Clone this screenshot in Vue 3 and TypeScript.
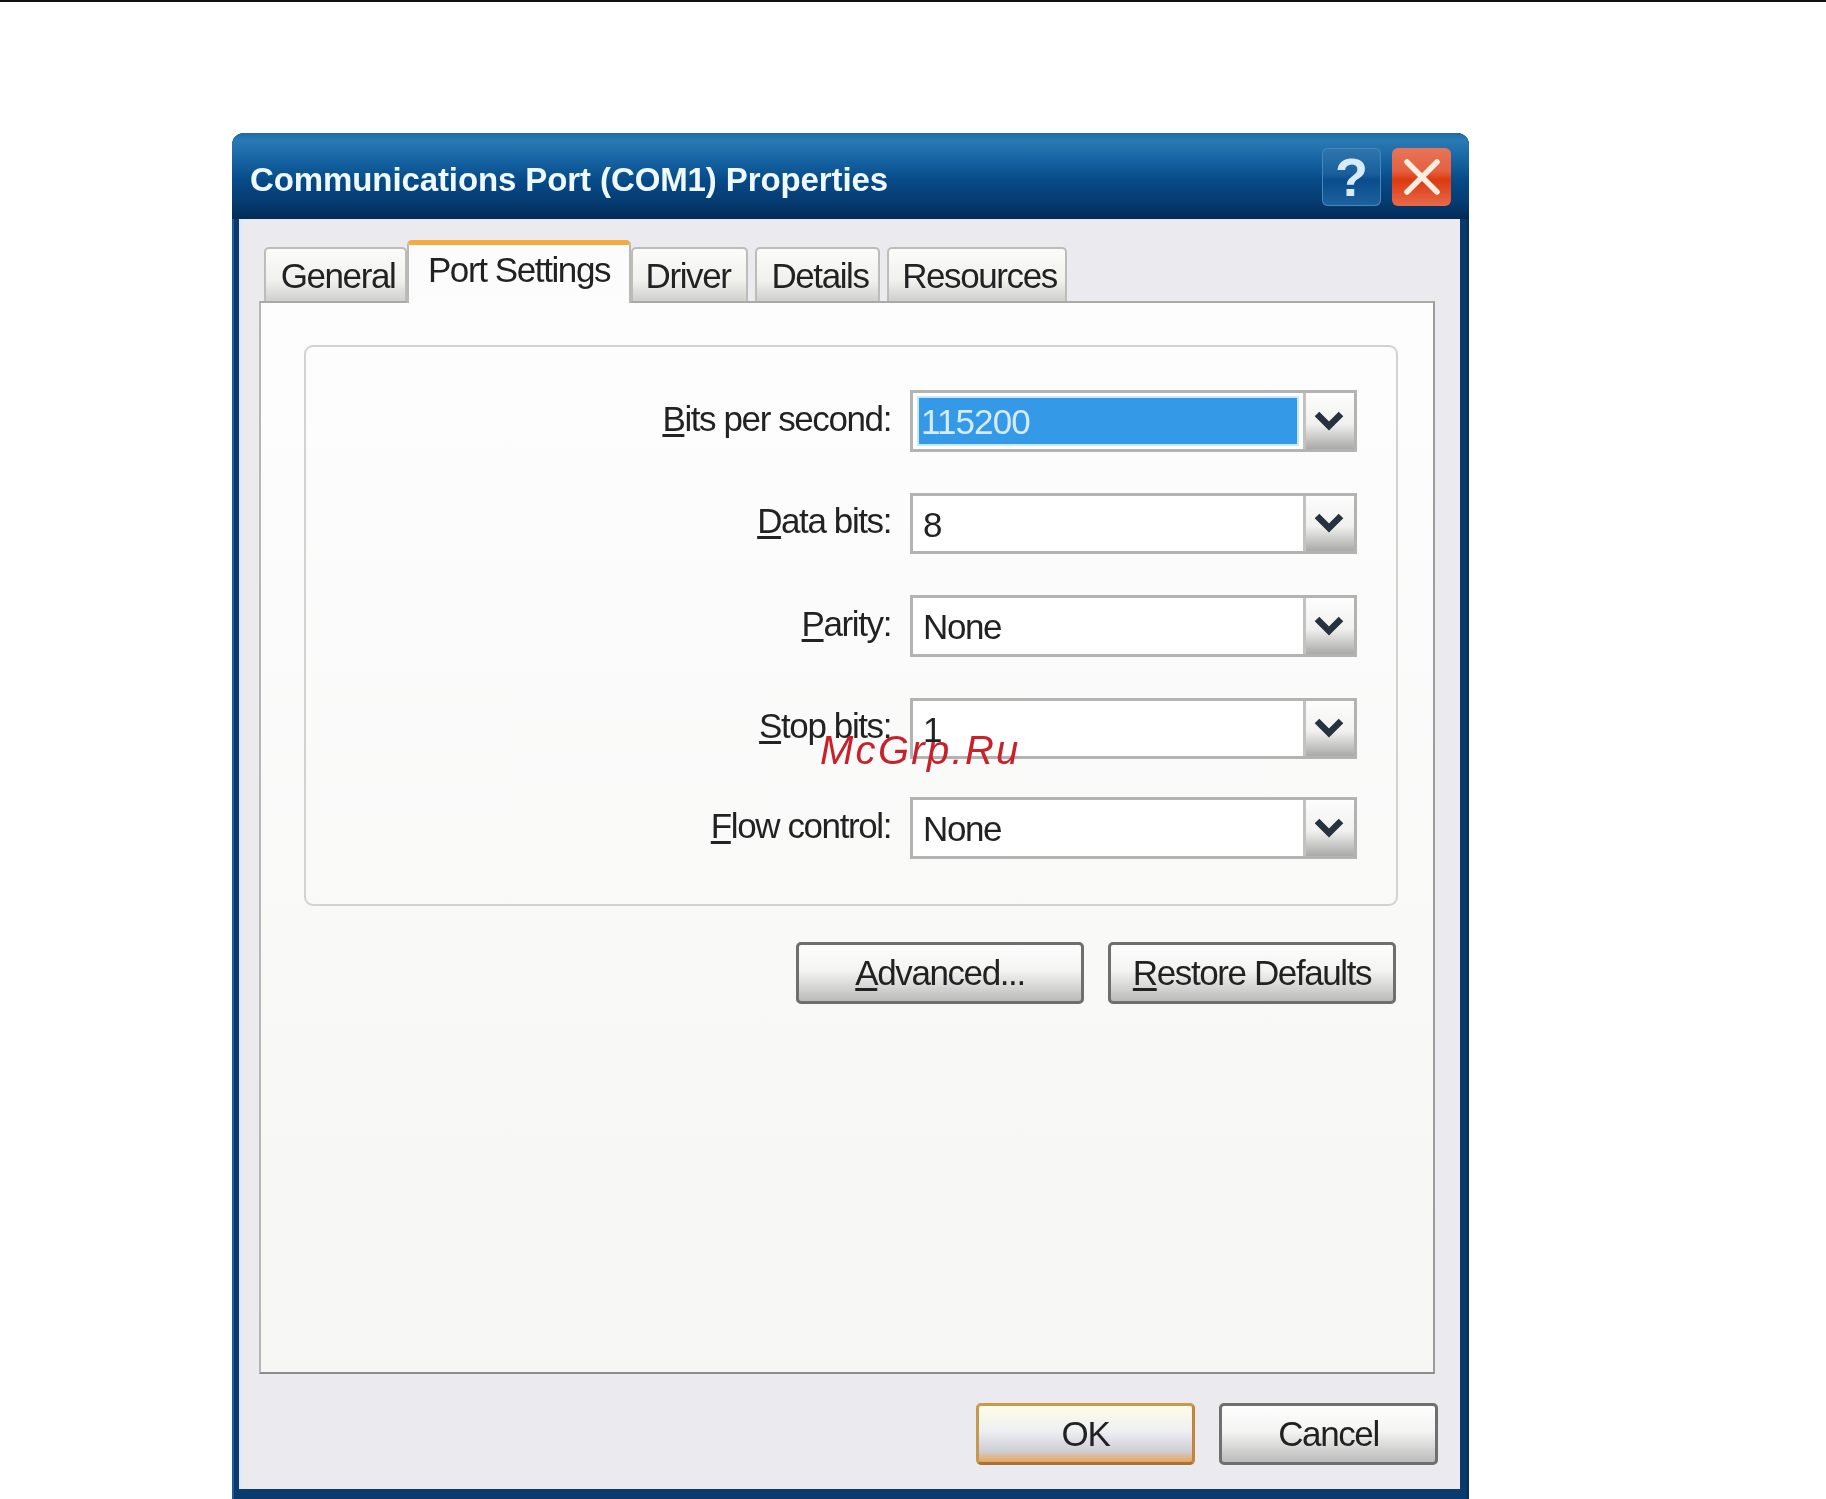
<script setup lang="ts">
interface Field {
  key: string
  rest: string
  value: string
  selected?: boolean
  tight?: boolean
}
const tabs = ['General', 'Port Settings', 'Driver', 'Details', 'Resources']
const fields: Field[] = [
  { key: 'B', rest: 'its per second:', value: '115200', selected: true },
  { key: 'D', rest: 'ata bits:', value: '8' },
  { key: 'P', rest: 'arity:', value: 'None' },
  { key: 'S', rest: 'top bits:', value: '1' },
  { key: 'F', rest: 'low control:', value: 'None', tight: true }
]
</script>

<template>
  <div class="page">
    <div class="window">
      <div class="titlebar">
        <span class="title">Communications Port (COM1) Properties</span>
        <div class="caption-buttons">
          <div class="cap help">?</div>
          <div class="cap close">
            <svg width="38" height="38" viewBox="0 0 38 38">
              <path d="M4 4 L34 34 M34 4 L4 34" stroke="#fdeee0" stroke-width="5.5" stroke-linecap="round" />
            </svg>
          </div>
        </div>
      </div>

      <div class="client">
        <div class="tabs">
          <div
            v-for="tab in tabs"
            :key="tab"
            class="tab"
            :class="['tab-' + tab.split(' ')[0].toLowerCase(), { active: tab === 'Port Settings' }]"
          >
            {{ tab }}
          </div>
        </div>

        <div class="panel">
          <div class="group">
            <div v-for="f in fields" :key="f.key" class="row" :class="{ tight: f.tight }">
              <span class="label"><u>{{ f.key }}</u>{{ f.rest }}</span>
              <div class="combo">
                <div class="value">
                  <span class="value-text" :class="{ selected: f.selected }">{{ f.value }}</span>
                </div>
                <div class="drop">
                  <svg width="32" height="24" viewBox="0 0 32 24">
                    <path d="M4 5 L16 17 L28 5" fill="none" stroke="#27323f" stroke-width="6.5" />
                  </svg>
                </div>
              </div>
            </div>
          </div>

          <div class="actions">
            <button class="btn wide"><u>A</u>dvanced...</button>
            <button class="btn wide"><u>R</u>estore Defaults</button>
          </div>
        </div>

        <div class="footer">
          <button class="btn ok">OK</button>
          <button class="btn cancel">Cancel</button>
        </div>
      </div>

      <div class="watermark">McGrp.Ru</div>
    </div>
  </div>
</template>

<style scoped>
.page {
  height: 1499px;
  overflow: hidden;
  background: #fff;
  border-top: 2px solid #111;
  box-sizing: border-box;
  font-family: "Liberation Sans", Arial, sans-serif;
  color: #222;
}
.window {
  position: relative;
  box-sizing: border-box;
  width: 1237px;
  height: 1366px;
  margin: 131px 0 0 232px;
  background: #0b3a6e;
  border-radius: 12px 12px 0 0;
  display: flex;
  flex-direction: column;
  box-shadow: inset 2px 0 0 #1f5c96, inset -3px 0 0 #0a3260;
  filter: blur(0.5px);
}
.titlebar {
  height: 86px;
  flex: none;
  display: flex;
  align-items: center;
  justify-content: space-between;
  padding: 0 18px;
  box-sizing: border-box;
  border-radius: 12px 12px 0 0;
  background: linear-gradient(#1d6aa6 0%, #2a7ab5 8%, #14609f 35%, #074a88 55%, #053c72 80%, #022a57 100%);
}
.title {
  color: #eefaff;
  font-weight: 700;
  font-size: 33px;
  letter-spacing: -0.1px;
  margin-top: 7px;
}
.caption-buttons {
  display: flex;
  gap: 11px;
  margin-top: 1px;
}
.cap {
  width: 59px;
  height: 58px;
  border-radius: 6px;
  display: flex;
  align-items: center;
  justify-content: center;
}
.help {
  background: linear-gradient(#2f76ad, #1a5f9c 45%, #0a4c8c 55%, #1e639f);
  color: #d6ecfa;
  font-size: 54px;
  font-weight: 700;
  box-shadow: inset 0 0 0 1px #4688bb;
}
.close {
  background: linear-gradient(#e8755a, #e4603f 40%, #dc3a10 55%, #e8694a);
}
.client {
  flex: 1;
  margin: 0 9px 10px 7px;
  padding: 21px 22px 0 20px;
  background: #ebeaee;
  box-shadow: inset 3px 0 0 #dfeafa;
}
.tabs {
  display: flex;
  align-items: flex-end;
  height: 61px;
  padding-left: 5px;
  gap: 7px;
}
.tab {
  box-sizing: border-box;
  height: 54px;
  display: flex;
  align-items: center;
  justify-content: center;
  font-size: 35px;
  letter-spacing: -1.4px;
  padding: 1px 0 0 5px;
  border: 2px solid #bdbdb8;
  border-bottom: none;
  border-radius: 5px 5px 0 0;
  background: linear-gradient(#fbfbf9, #f1f1ee 60%, #cfcfcd);
}
.tab-general { width: 143px; }
.tab-port { width: 224px; margin: 0 -7px; }
.tab-driver { width: 117px; padding: 1px 3px 0 0; }
.tab-details { width: 125px; }
.tab-resources { width: 180px; }
.tab.active {
  position: relative;
  z-index: 1;
  height: 63px;
  margin-bottom: -2px;
  padding: 0 0 8px;
  background: #fcfcfc;
  border-top: 5px solid #f5aa3e;
  border-color: #f5aa3e #b8b8b4 #fcfcfc;
}
.panel {
  box-sizing: border-box;
  height: 1073px;
  margin-right: 3px;
  padding: 42px 35px 0 43px;
  background: linear-gradient(#fdfdfd, #f6f6f5);
  border: 2px solid #a9a9a6;
  border-color: #a9a9a6 #9c9c9a #8c8c8a #b6b6b3;
}
.group {
  box-sizing: border-box;
  height: 561px;
  padding: 43px 39px 0 0;
  border: 2px solid #d3d2cf;
  border-radius: 9px;
  display: flex;
  flex-direction: column;
  gap: 41px;
}
.row {
  display: flex;
  justify-content: flex-end;
  align-items: center;
  gap: 19px;
}
.row.tight {
  margin-top: -3px;
}
.label {
  font-size: 35px;
  letter-spacing: -1.4px;
  margin-top: -4px;
}
u {
  text-underline-offset: 3px;
  text-decoration-thickness: 3px;
}
.combo {
  box-sizing: border-box;
  width: 447px;
  height: 61.5px;
  display: flex;
  background: #fff;
  border: 3px solid #b3b3b1;
}
.value {
  flex: 1;
  padding: 5px 6px;
  display: flex;
}
.value-text {
  flex: 1;
  font-size: 35px;
  letter-spacing: -1.4px;
  line-height: 48px;
  padding-left: 4px;
}
.value-text.selected {
  background: #3499e6;
  color: #d4ebfa;
  padding-left: 2px;
  letter-spacing: -0.9px;
  outline: 2px solid #c5e8fb;
}
.drop {
  box-sizing: border-box;
  width: 51px;
  flex: none;
  display: flex;
  align-items: center;
  justify-content: center;
  background: linear-gradient(#fdfdfd, #f1f1f0 55%, #a9a9a8);
  border-left: 3px solid #c2c2c0;
  padding-right: 3px;
}
.actions {
  display: flex;
  justify-content: flex-end;
  gap: 24px;
  margin-top: 36px;
  padding-right: 2px;
}
.btn {
  box-sizing: border-box;
  height: 62px;
  font-family: inherit;
  font-size: 35px;
  letter-spacing: -1.4px;
  color: #222;
  padding: 0;
  border: 3px solid #6f6f6e;
  border-radius: 5px;
  background: linear-gradient(#fdfdfd, #f4f4f3 45%, #bcbcbc);
}
.wide {
  width: 288px;
}
.footer {
  display: flex;
  justify-content: flex-end;
  gap: 24px;
  margin-top: 29px;
}
.ok {
  width: 219px;
  border-color: #c79a4e #c4843a #a8703a #c49a52;
  background: linear-gradient(#fffde8, #eeeff2 45%, #cdcfd6 80%, #eaa65a);
}
.cancel {
  width: 219px;
}
.watermark {
  position: absolute;
  left: 588px;
  top: 595px;
  font-size: 40px;
  font-style: italic;
  letter-spacing: 2.3px;
  color: #c9202a;
  white-space: nowrap;
}
</style>
